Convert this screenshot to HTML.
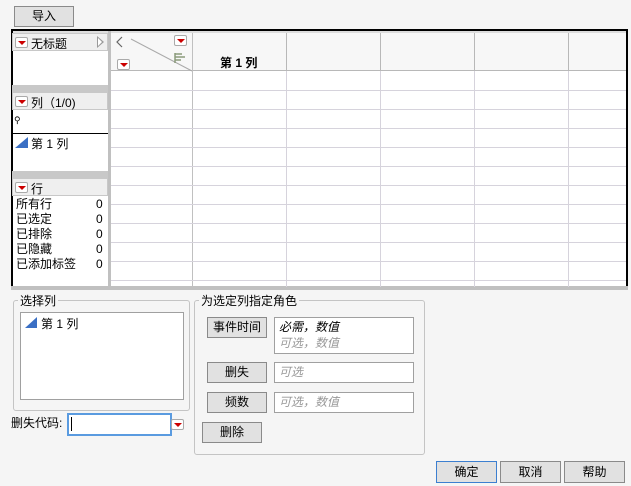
<!DOCTYPE html>
<html><head><meta charset="utf-8"><style>
*{box-sizing:border-box;margin:0;padding:0}
body{width:631px;height:486px;background:#f5f5f5;font-family:"Liberation Sans","Noto Sans CJK SC",sans-serif;font-size:12px;color:#000;position:relative;overflow:hidden}
.a{position:absolute}
.btn{position:absolute;background:#e1e1e1;border:1px solid #8a8a8a;text-align:center;font-size:12px}
.dd{position:absolute;width:13px;height:11px;background:#fff;border:1px solid #aaa;border-radius:2px}
.dd:after{content:"";position:absolute;left:2px;top:3px;border-left:4px solid transparent;border-right:4px solid transparent;border-top:4px solid #c00}
.hl{position:absolute;height:1px;background:#d6d3dc}
.vl{position:absolute;width:1px;background:#d6d3dc}
.ph{position:absolute;left:12px;width:96px;height:18px;background:#efefef;border:1px solid #c8c8c8}
.gb{position:absolute;border:1px solid #c4c4c4;border-radius:3px}
.gl{position:absolute;background:#f5f5f5;padding:0 2px;top:-9px;left:4px}
.box{position:absolute;background:#fff;border:1px solid #a0a0a0;font-style:italic;color:#999;padding-left:4px;line-height:18px}
</style></head><body>
<div class="btn" style="left:14px;top:6px;width:60px;height:21px;line-height:19px">导入</div>
<!-- table -->
<div class="a" style="left:11px;top:29px;width:617px;height:261px;background:#fff;border:2px solid #000;border-bottom:none"></div>
<div class="a" style="left:13px;top:31px;width:613px;height:2px;background:#ddd"></div>
<div class="a" style="left:11px;top:286px;width:617px;height:4px;background:#c0c0c0"></div>
<!-- left panel -->
<div class="a" style="left:108px;top:31px;width:3px;height:256px;background:#c0c0c0"></div>
<div class="ph" style="top:33px"></div>
<div class="dd" style="left:15px;top:37px"></div>
<div class="a" style="left:31px;top:35px">无标题</div>
<div class="a" style="left:97px;top:36px;width:0;height:0;border-top:6px solid transparent;border-bottom:6px solid transparent;border-left:7px solid #999"></div>
<div class="a" style="left:98px;top:38px;width:0;height:0;border-top:4px solid transparent;border-bottom:4px solid transparent;border-left:4px solid #fff"></div>
<div class="a" style="left:12px;top:85px;width:96px;height:7px;background:#c8c8c8"></div>
<div class="ph" style="top:92px"></div>
<div class="dd" style="left:15px;top:96px"></div>
<div class="a" style="left:31px;top:94px">列（1/0)</div>
<div class="a" style="left:14px;top:115px;font-size:9px">&#9906;</div>
<div class="a" style="left:12px;top:133px;width:96px;height:1px;background:#000"></div>
<svg class="a" style="left:15px;top:137px" width="13" height="11"><polygon points="0,11 13,11 13,0" fill="#3a6fc4"/></svg>
<div class="a" style="left:31px;top:135px">第 1 列</div>
<div class="a" style="left:12px;top:171px;width:96px;height:7px;background:#c8c8c8"></div>
<div class="ph" style="top:178px"></div>
<div class="dd" style="left:15px;top:182px"></div>
<div class="a" style="left:31px;top:180px">行</div>
<div class="a" style="left:16px;top:197px;line-height:15px">所有行<br>已选定<br>已排除<br>已隐藏<br>已添加标签</div>
<div class="a" style="left:96px;top:197px;line-height:15px">0<br>0<br>0<br>0<br>0</div>
<!-- grid header -->
<div class="a" style="left:111px;top:33px;width:515px;height:38px;background:#f7f7f7;border-bottom:1px solid #b8b8b8"></div>
<div class="a" style="left:192px;top:33px;width:1px;height:254px;background:#c0c0c0"></div>
<div class="a" style="left:286px;top:33px;width:1px;height:38px;background:#b8b8b8"></div>
<div class="a" style="left:380px;top:33px;width:1px;height:38px;background:#b8b8b8"></div>
<div class="a" style="left:474px;top:33px;width:1px;height:38px;background:#b8b8b8"></div>
<div class="a" style="left:568px;top:33px;width:1px;height:38px;background:#b8b8b8"></div>
<div class="vl" style="left:286px;top:71px;height:216px"></div>
<div class="vl" style="left:380px;top:71px;height:216px"></div>
<div class="vl" style="left:474px;top:71px;height:216px"></div>
<div class="vl" style="left:568px;top:71px;height:216px"></div>
<svg class="a" style="left:111px;top:33px" width="82" height="39"><polyline points="11,4 6,9 11,14" fill="none" stroke="#666" stroke-width="1.2"/><line x1="20" y1="6" x2="81" y2="38" stroke="#aaa"/><g stroke="#8a9a7a" stroke-width="1.5"><line x1="64" y1="20" x2="64" y2="30"/><line x1="64" y1="21" x2="71" y2="21"/><line x1="64" y1="24" x2="74" y2="24"/><line x1="64" y1="27" x2="70" y2="27"/></g></svg>
<div class="dd" style="left:174px;top:35px"></div>
<div class="dd" style="left:117px;top:59px"></div>
<div class="a" style="left:220px;top:54px;font-weight:bold">第 1 列</div>
<div class="hl" style="left:111px;top:90px;width:515px"></div>
<div class="hl" style="left:111px;top:109px;width:515px"></div>
<div class="hl" style="left:111px;top:128px;width:515px"></div>
<div class="hl" style="left:111px;top:147px;width:515px"></div>
<div class="hl" style="left:111px;top:166px;width:515px"></div>
<div class="hl" style="left:111px;top:185px;width:515px"></div>
<div class="hl" style="left:111px;top:204px;width:515px"></div>
<div class="hl" style="left:111px;top:223px;width:515px"></div>
<div class="hl" style="left:111px;top:242px;width:515px"></div>
<div class="hl" style="left:111px;top:261px;width:515px"></div>
<div class="hl" style="left:111px;top:280px;width:515px"></div>
<!-- select columns -->
<div class="gb" style="left:13px;top:300px;width:177px;height:111px"><span class="gl">选择列</span></div>
<div class="a" style="left:20px;top:312px;width:164px;height:88px;background:#fff;border:1px solid #a0a0a0"></div>
<svg class="a" style="left:25px;top:317px" width="12" height="11"><polygon points="0,11 12,11 12,0" fill="#3a6fc4"/></svg>
<div class="a" style="left:41px;top:315px">第 1 列</div>
<div class="a" style="left:11px;top:414px">删失代码:</div>
<div class="a" style="left:67px;top:413px;width:105px;height:23px;background:#fff;border:2px solid #5a9be0"></div>
<div class="a" style="left:71px;top:417px;width:1px;height:14px;background:#000"></div>
<div class="dd" style="left:171px;top:419px"></div>
<!-- roles -->
<div class="gb" style="left:194px;top:300px;width:231px;height:155px"><span class="gl">为选定列指定角色</span></div>
<div class="btn" style="left:207px;top:317px;width:60px;height:21px;line-height:19px">事件时间</div>
<div class="box" style="left:274px;top:317px;width:140px;height:37px;line-height:16px;padding-top:1px"><span style="color:#000">必需，数值</span><br>可选，数值</div>
<div class="btn" style="left:207px;top:362px;width:60px;height:21px;line-height:19px">删失</div>
<div class="box" style="left:274px;top:362px;width:140px;height:21px">可选</div>
<div class="btn" style="left:207px;top:392px;width:60px;height:21px;line-height:19px">频数</div>
<div class="box" style="left:274px;top:392px;width:140px;height:21px">可选，数值</div>
<div class="btn" style="left:202px;top:422px;width:60px;height:21px;line-height:19px">删除</div>
<!-- bottom buttons -->
<div class="btn" style="left:436px;top:461px;width:61px;height:22px;line-height:20px;border-color:#3c7fd0">确定</div>
<div class="btn" style="left:500px;top:461px;width:61px;height:22px;line-height:20px">取消</div>
<div class="btn" style="left:564px;top:461px;width:61px;height:22px;line-height:20px">帮助</div>
</body></html>
